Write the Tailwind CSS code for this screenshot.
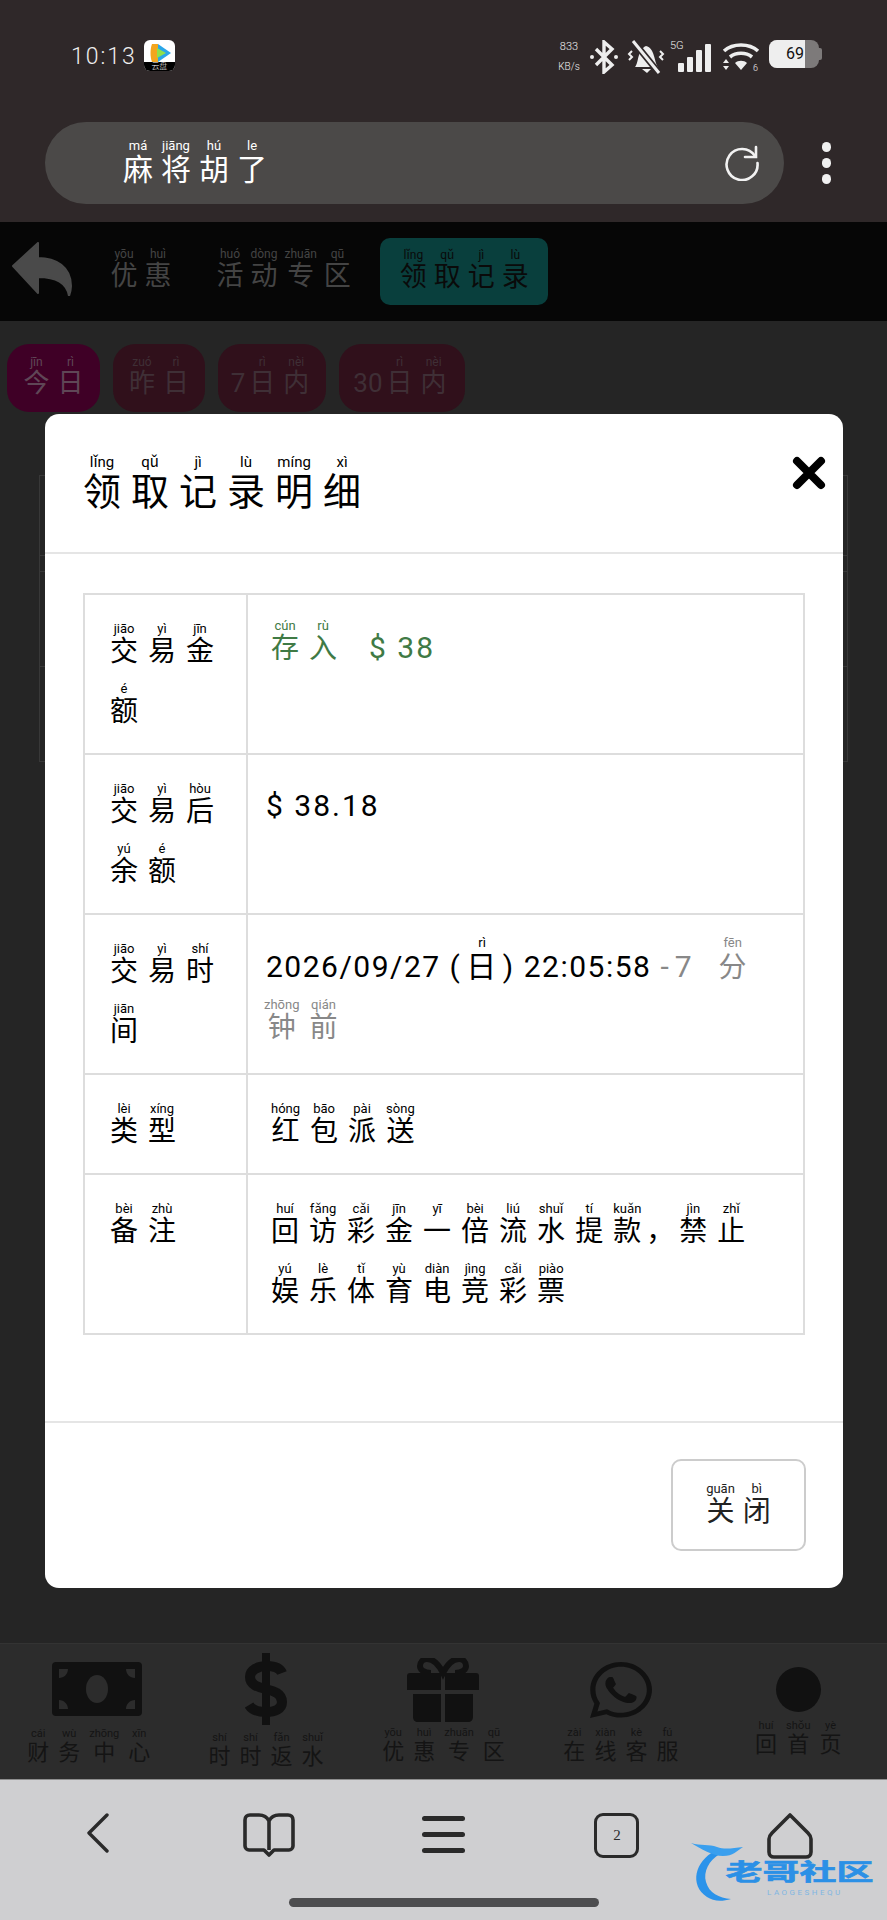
<!DOCTYPE html>
<html lang="zh">
<head>
<meta charset="utf-8">
<script src="https://cdn.jsdelivr.net/npm/@tailwindcss/browser@4"></script>
</head>
<body>
<div class="relative flex flex-col w-[887px] h-[1920px] overflow-hidden bg-[#252525] font-['Roboto','Noto_Sans_CJK_SC',sans-serif] font-light [&_ruby]:leading-none [&_rt]:font-normal [&_rt]:leading-[13px]">

  <!-- phone status + address bar -->
  <div class="h-[222px] shrink-0 bg-[#2f2829] text-[#eeeeee]">
    <div class="h-[122px] flex justify-between pl-[71px] pr-[65px] pt-[40px]">
      <div class="flex items-start gap-[7px]">
        <span class="text-[23px] leading-[32px] tracking-[2px] mt-[1px]">10:13</span>
        <div class="relative w-[31px] h-[31px] rounded-[6px] bg-white overflow-hidden">
          <svg viewBox="0 0 31 31" class="w-[31px] h-[31px]"><path d="M8 4h6l13 9-13 9H8z" fill="#2aa6e8"/><path d="M8 4c-2 5-2 13 0 18l6 0V4z" fill="#f3a51e"/><path d="M13 8l9 5-9 5z" fill="#8fe04a"/></svg>
          <span class="absolute left-0 right-0 bottom-0 h-[9px] bg-black text-white text-[8px] leading-[9px] text-center">云盘</span>
        </div>
      </div>
      <div class="flex items-start">
        <div class="w-[26px] mr-[7px] text-center text-[11px] leading-[11px]"><div class="mt-[1px]">833</div><div class="mt-[9px] whitespace-nowrap text-[10px]">KB/s</div></div>
        <svg viewBox="0 0 30 34" class="w-[30px] h-[34px]" fill="none" stroke="#eeeeee" stroke-width="3.4"><path d="M7 9l16 16-8 7V2l8 7L7 25"/><circle cx="3" cy="17" r="2" fill="#eeeeee" stroke="none"/><circle cx="27" cy="17" r="2" fill="#eeeeee" stroke="none"/></svg>
        <svg viewBox="0 0 38 34" class="w-[38px] h-[34px] ml-[8px]" fill="none"><path d="M8 27c4-4 2-17 11-21 9 2 8 16 12 21z" fill="#eeeeee"/><path d="M15 29h9l-4 4z" fill="#eeeeee"/><path d="M6 1l26 32" stroke="#2f2829" stroke-width="6.500"/><path d="M6 1l26 32" stroke="#eeeeee" stroke-width="3"/><path d="M5 11l-3 3 3 3-3 3M33 11l3 3-3 3 3 3" stroke="#eeeeee" stroke-width="2"/></svg>
        <div class="relative w-[44px] h-[32px] ml-[5px]">
          <span class="absolute left-0 top-0 text-[11px] leading-[11px]">5G</span>
          <div class="absolute left-[8px] bottom-0 flex items-end gap-[3px]">
            <span class="w-[6px] h-[9px] rounded-[1px] bg-[#eeeeee]"></span><span class="w-[6px] h-[15px] rounded-[1px] bg-[#eeeeee]"></span><span class="w-[6px] h-[22px] rounded-[1px] bg-[#eeeeee]"></span><span class="w-[6px] h-[28px] rounded-[1px] bg-[#eeeeee]"></span>
          </div>
        </div>
        <svg viewBox="0 0 38 30" class="w-[38px] h-[30px] ml-[8px] mt-[2px]" fill="none" stroke="#eeeeee" stroke-width="3.6"><path d="M2 9c9-8 25-8 34 0M8 15c6-5 16-5 22 0"/><path d="M19 28l-6-7c3-3 9-3 12 0z" fill="#eeeeee" stroke="none"/><path d="M1 21l3-4 3 4zM1 24l3 4 3-4z" fill="#eeeeee" stroke="none"/><text x="31" y="29" font-size="9" fill="#eeeeee" stroke="none">6</text></svg>
        <div class="flex items-center ml-[9px]">
          <div class="relative w-[50px] h-[28px] rounded-[8px] bg-[#7d7a7a] overflow-hidden">
            <div class="w-[36px] h-[28px] bg-[#eeeeee] text-[#111111] text-right text-[16px] leading-[28px] font-normal pr-[1px]">69</div>
          </div>
          <div class="w-[3px] h-[12px] rounded-r-[2px] bg-[#7d7a7a]"></div>
        </div>
      </div>
    </div>
    <div class="flex items-center pl-[45px] pr-[54px]">
      <div class="flex items-center justify-between w-[739px] h-[82px] rounded-[41px] bg-[#4b4948] pl-[74px] pr-[24px] text-white text-[30px] leading-[50px] font-normal [&_ruby]:mx-[4px] [&_rt]:text-[13px]">
        <div class="mt-[8px]"><ruby>麻<rt>má</rt></ruby><ruby>将<rt>jiāng</rt></ruby><ruby>胡<rt>hú</rt></ruby><ruby>了<rt>le</rt></ruby></div>
        <svg viewBox="0 0 36 36" class="w-[36px] h-[36px]" fill="none" stroke="#f2f2f2" stroke-width="2.6" stroke-linecap="round"><path d="M31 11A15.500 15.500 0 1 0 33.500 18"/><path d="M32 2v10H21"/></svg>
      </div>
      <div class="flex flex-col gap-[6px] ml-[38px]">
        <span class="w-[9px] h-[10px] rounded-full bg-[#f0f0f0]"></span><span class="w-[9px] h-[10px] rounded-full bg-[#f0f0f0]"></span><span class="w-[9px] h-[10px] rounded-full bg-[#f0f0f0]"></span>
      </div>
    </div>
  </div>

  <!-- page header -->
  <div class="flex items-center h-[99px] shrink-0 bg-[#060606] pl-[12px] text-[#444444] text-[27px] leading-[44px] font-normal [&_ruby]:mx-[3.500px] [&_rt]:text-[12px]">
    <svg viewBox="0 0 60 54" class="w-[60px] h-[54px] mt-[-6px]"><path d="M26 1v15c18 0 33 9 33 28 0 4-1 7-2 10-2-13-14-19-31-19v16L1 24z" fill="#4a4a4a" stroke="#4a4a4a" stroke-width="2" stroke-linejoin="round"/></svg>
    <div class="ml-[35px] mt-[4px]"><ruby>优<rt>yōu</rt></ruby><ruby>惠<rt>huì</rt></ruby></div>
    <div class="ml-[38px] mt-[4px]"><ruby>活<rt>huó</rt></ruby><ruby>动<rt>dòng</rt></ruby><ruby>专<rt>zhuān</rt></ruby><ruby>区<rt>qū</rt></ruby></div>
    <div class="flex items-center justify-center w-[168px] h-[67px] ml-[26px] mt-[-1px] rounded-[10px] bg-[#093f3d] text-[#0a0a0a]"><div class="mt-[5px]"><ruby>领<rt>lǐng</rt></ruby><ruby>取<rt>qǔ</rt></ruby><ruby>记<rt>jì</rt></ruby><ruby>录<rt>lù</rt></ruby></div></div>
  </div>

  <!-- page content behind the dialog -->
  <div class="flex-1 px-[7px] pt-[23px]">
    <div class="flex gap-[13px] text-[26px] leading-[40px] font-normal [&_ruby]:mx-[4px] [&_rt]:text-[12px]">
      <div class="flex items-center justify-center w-[93px] h-[68px] rounded-[22px] bg-[#3f0026] text-[#5f4656]"><div class="mt-[3px]"><ruby>今<rt>jīn</rt></ruby><ruby>日<rt>rì</rt></ruby></div></div>
      <div class="flex items-center justify-center w-[92px] h-[68px] rounded-[22px] bg-[#30101b] text-[#3f2f36]"><div class="mt-[3px]"><ruby>昨<rt>zuó</rt></ruby><ruby>日<rt>rì</rt></ruby></div></div>
      <div class="flex items-center justify-center w-[108px] h-[68px] rounded-[22px] bg-[#30101b] text-[#3f2f36]"><div class="mt-[3px]">7<ruby>日<rt>rì</rt></ruby><ruby>内<rt>nèi</rt></ruby></div></div>
      <div class="flex items-center justify-center w-[126px] h-[68px] rounded-[22px] bg-[#30101b] text-[#3f2f36]"><div class="mt-[3px]">30<ruby>日<rt>rì</rt></ruby><ruby>内<rt>nèi</rt></ruby></div></div>
    </div>
    <div class="w-[809px] h-[287px] mt-[63px] ml-[32px] border border-[#383838]">
      <div class="h-[80px] border-b border-[#383838]"></div>
      <div class="h-[16px] border-b border-[#383838]"></div>
      <div class="h-[95px] border-b border-[#383838]"></div>
    </div>
  </div>

  <!-- fixed bottom nav of the page -->
  <div class="grid grid-cols-5 h-[136px] shrink-0 bg-[#2c2c2c] border-t border-[#333333] text-[#141414] text-[22px] leading-[36px] font-normal [&_ruby]:mx-[4.500px] [&_rt]:text-[11px]">
    <div class="flex flex-col items-center">
      <svg viewBox="0 0 90 54" class="w-[90px] h-[54px] mt-[18px] ml-[16px]"><rect width="90" height="54" rx="4" fill="#111111"/><ellipse cx="45" cy="27" rx="11" ry="14" fill="#2c2c2c"/><path d="M7 7h9c0 5-4 9-9 9zM83 7h-9c0 5 4 9 9 9zM7 47h9c0-5-4-9-9-9zM83 47h-9c0-5 4-9 9-9z" fill="#2c2c2c"/></svg>
      <div class="mt-[12px] whitespace-nowrap"><ruby>财<rt>cái</rt></ruby><ruby>务<rt>wù</rt></ruby><ruby>中<rt>zhōng</rt></ruby><ruby>心<rt>xīn</rt></ruby></div>
    </div>
    <div class="flex flex-col items-center">
      <svg viewBox="0 0 42 72" class="w-[42px] h-[72px] mt-[9px]" fill="none" stroke="#111111" stroke-width="10"><path d="M37 20c-2-5-8-7-15-7-9 0-17 4-17 11 0 16 32 8 32 25 0 7-7 10-16 10-8 0-14-2-17-7"/><path d="M21 0v72" stroke-width="8"/></svg>
      <div class="mt-[6px] whitespace-nowrap"><ruby>时<rt>shí</rt></ruby><ruby>时<rt>shí</rt></ruby><ruby>返<rt>fǎn</rt></ruby><ruby>水<rt>shuǐ</rt></ruby></div>
    </div>
    <div class="flex flex-col items-center">
      <svg viewBox="0 0 72 64" class="w-[72px] h-[64px] mt-[14px]"><path d="M24 15c-8 0-11-4-11-7 0-4 3-7 7-7 6 0 12 6 16 14 4-8 10-14 16-14 4 0 7 3 7 7 0 3-3 7-11 7" fill="none" stroke="#111111" stroke-width="6"/><path d="M3 15h31v17H0V18c0-2 1-3 3-3zM38 15h31c2 0 3 1 3 3v14H38zM6 36h28v28H11c-3 0-5-2-5-5zM38 36h28v23c0 3-2 5-5 5H38z" fill="#111111"/></svg>
      <div class="mt-[5px] whitespace-nowrap"><ruby>优<rt>yōu</rt></ruby><ruby>惠<rt>huì</rt></ruby><ruby>专<rt>zhuān</rt></ruby><ruby>区<rt>qū</rt></ruby></div>
    </div>
    <div class="flex flex-col items-center">
      <svg viewBox="0 0 448 512" class="w-[62px] h-[64px] mt-[14px]" preserveAspectRatio="none"><path fill="#111111" d="M380.9 97.1C339 55.1 283.2 32 223.9 32c-122.4 0-222 99.6-222 222 0 39.1 10.200 77.300 29.600 111L0 480l117.700-30.900c32.400 17.700 68.900 27 106.100 27h.1c122.300 0 224.100-99.600 224.100-222 0-59.300-25.200-115-67.100-157zm-157 341.600c-33.200 0-65.700-8.900-94-25.700l-6.700-4-69.800 18.300L72 359.200l-4.400-7c-18.500-29.400-28.200-63.300-28.200-98.200 0-101.700 82.800-184.500 184.600-184.500 49.300 0 95.600 19.200 130.400 54.100 34.800 34.900 56.200 81.200 56.100 130.500 0 101.800-84.900 184.600-186.600 184.600zm101.200-138.200c-5.500-2.800-32.800-16.200-37.900-18-5.100-1.900-8.800-2.800-12.500 2.800-3.700 5.600-14.300 18-17.600 21.800-3.200 3.700-6.500 4.200-12 1.400-32.600-16.300-54-29.100-75.500-66-5.700-9.800 5.700-9.100 16.300-30.300 1.800-3.700.9-6.900-.5-9.700-1.400-2.800-12.500-30.100-17.100-41.200-4.500-10.800-9.100-9.300-12.500-9.500-3.200-.2-6.900-.2-10.600-.2-3.700 0-9.700 1.400-14.800 6.900-5.100 5.600-19.400 19-19.400 46.300 0 27.300 19.900 53.700 22.600 57.400 2.800 3.700 39.100 59.700 94.800 83.800 35.200 15.200 49 16.500 66.600 13.900 10.700-1.600 32.800-13.400 37.400-26.400 4.600-13 4.600-24.100 3.200-26.400-1.300-2.500-5-3.900-10.500-6.600z"/></svg>
      <div class="mt-[5px] whitespace-nowrap"><ruby>在<rt>zài</rt></ruby><ruby>线<rt>xiàn</rt></ruby><ruby>客<rt>kè</rt></ruby><ruby>服<rt>fú</rt></ruby></div>
    </div>
    <div class="flex flex-col items-center">
      <div class="w-[45px] h-[45px] mt-[23px] rounded-full bg-[#111111]"></div>
      <div class="mt-[7px] whitespace-nowrap"><ruby>回<rt>huí</rt></ruby><ruby>首<rt>shǒu</rt></ruby><ruby>页<rt>yè</rt></ruby></div>
    </div>
  </div>

  <!-- browser toolbar -->
  <div class="relative flex flex-col items-center h-[141px] shrink-0 bg-[#cfcfd1] border-t border-[#8d8d8d]">
    <div class="grid grid-cols-5 w-full h-[118px] pt-[33px] text-[#2a2a2a]">
      <div class="flex justify-center"><svg viewBox="0 0 24 40" class="w-[24px] h-[40px] ml-[18px]" fill="none" stroke="#2a2a2a" stroke-width="3.400" stroke-linecap="round" stroke-linejoin="round"><path d="M21 2L3 20l18 18"/></svg></div>
      <div class="flex justify-center"><svg viewBox="0 0 52 44" class="w-[52px] h-[44px] ml-[5px]" fill="none" stroke="#2a2a2a" stroke-width="3.600" stroke-linejoin="round"><path d="M26 8c-2-4-6-6-10-6H7C4 2 2 4 2 7v26c0 2 2 4 4 4h15l5 5 5-5h15c2 0 4-2 4-4V7c0-3-2-5-5-5h-9c-4 0-8 2-10 6zv29"/></svg></div>
      <div class="flex flex-col items-center gap-[11px] pt-[3px]"><span class="w-[43px] h-[5px] rounded-full bg-[#2a2a2a]"></span><span class="w-[43px] h-[5px] rounded-full bg-[#2a2a2a]"></span><span class="w-[43px] h-[5px] rounded-full bg-[#2a2a2a]"></span></div>
      <div class="flex justify-center"><div class="flex items-center justify-center w-[45px] h-[45px] mr-[8px] rounded-[9px] border-[3.500px] border-[#2a2a2a] font-['Liberation_Serif',serif] font-normal text-[15px]">2</div></div>
      <div class="flex justify-center"><svg viewBox="0 0 46 46" class="w-[46px] h-[46px] mr-[16px]" fill="none" stroke="#2a2a2a" stroke-width="3.600" stroke-linejoin="round"><path d="M23 2l18 18c2 2 3 4 3 6v13c0 3-2 5-5 5H7c-3 0-5-2-5-5V26c0-2 1-4 3-6z"/></svg></div>
    </div>
    <div class="w-[310px] h-[9px] rounded-full bg-[#4d4d4f]"></div>
    <!-- watermark -->
    <svg viewBox="0 0 70 62" class="absolute left-[689px] top-[61px] w-[70px] h-[62px]" fill="none"><path d="M26 10C6 20 0 44 18 56c6 4 14 5 24 2-12-1-22-6-25-17-3-10 3-22 14-28z" fill="#2b93ea"/><path d="M2 2c10 3 18 1 26 4s16 1 26 0c-6 4-10 9-20 9S12 8 2 2z" fill="#3a9fee"/></svg>
    <div class="absolute left-[722px] top-[80px] w-[155px] origin-top scale-y-62 text-center text-[#2b90e6] text-[37px] leading-[32px] font-bold font-['Noto_Sans_CJK_SC',sans-serif] whitespace-nowrap [-webkit-text-stroke:1px_#2b90e6]">老哥社区</div>
    <div class="absolute left-[767px] top-[108px] text-[#7fb6e2] text-[8px] leading-[10px] font-normal tracking-[2.500px]">LAOGESHEQU</div>
  </div>

  <!-- dialog -->
  <div class="absolute left-[45px] top-[414px] flex flex-col w-[798px] h-[1174px] rounded-[14px] bg-white text-black font-normal">
    <div class="relative h-[140px] shrink-0 border-b-2 border-[#e5e5e5] pl-[33px] pt-[39px] text-[38px] leading-[50px] [&_ruby]:mx-[5px] [&_rt]:text-[15px]">
      <div><ruby>领<rt>lǐng</rt></ruby><ruby>取<rt>qǔ</rt></ruby><ruby>记<rt>jì</rt></ruby><ruby>录<rt>lù</rt></ruby><ruby>明<rt>míng</rt></ruby><ruby>细<rt>xì</rt></ruby></div>
      <svg viewBox="0 0 34 34" class="absolute left-[747px] top-[42px] w-[34px] h-[34px]" fill="none" stroke="#000000" stroke-width="8" stroke-linecap="round"><path d="M5 5l24 24M29 5L5 29"/></svg>
    </div>
    <div class="flex-1 px-[38px] pt-[39px]">
      <table class="w-[722px] table-fixed border-collapse border-2 border-[#dddddd] text-[28px] leading-[60px] [&_ruby]:mx-[5px] [&_rt]:text-[13px] [&_td]:border-2 [&_td]:border-[#dddddd] [&_td]:align-top">
        <tbody>
          <tr class="h-[160px]">
            <td class="w-[163px] pl-[20px] pt-[27px]"><ruby>交<rt>jiāo</rt></ruby><ruby>易<rt>yì</rt></ruby><ruby>金<rt>jīn</rt></ruby><br><ruby>额<rt>é</rt></ruby></td>
            <td class="pl-[18px] pt-[23px] text-[#3f7a45] whitespace-nowrap"><ruby>存<rt>cún</rt></ruby><ruby>入<rt>rù</rt></ruby><span class="ml-[27px] text-[30px] tracking-[2px]">$ 38</span></td>
          </tr>
          <tr class="h-[160px]">
            <td class="pl-[20px] pt-[27px]"><ruby>交<rt>jiāo</rt></ruby><ruby>易<rt>yì</rt></ruby><ruby>后<rt>hòu</rt></ruby><br><ruby>余<rt>yú</rt></ruby><ruby>额<rt>é</rt></ruby></td>
            <td class="pl-[18px] pt-[21px] text-[30px] tracking-[2px]">$ 38.18</td>
          </tr>
          <tr class="h-[160px]">
            <td class="pl-[20px] pt-[27px]"><ruby>交<rt>jiāo</rt></ruby><ruby>易<rt>yì</rt></ruby><ruby>时<rt>shí</rt></ruby><br><ruby>间<rt>jiān</rt></ruby></td>
            <td class="pl-[18px] pt-[22px] whitespace-nowrap"><span class="text-[30px] tracking-[1.500px] [&_rt]:tracking-normal">2026/09/27 (<ruby>日<rt>rì</rt></ruby>) 22:05:58</span><span class="ml-[9px] text-[#888888]"><span class="text-[30px] tracking-[6px]">-7</span><span class="ml-[16px]"><ruby>分<rt>fēn</rt></ruby></span><br><span class="ml-[-7px]"><ruby>钟<rt>zhōng</rt></ruby></span><ruby>前<rt>qián</rt></ruby></span></td>
          </tr>
          <tr class="h-[100px]">
            <td class="pl-[20px] pt-[27px]"><ruby>类<rt>lèi</rt></ruby><ruby>型<rt>xíng</rt></ruby></td>
            <td class="pl-[18px] pt-[27px]"><ruby>红<rt>hóng</rt></ruby><ruby>包<rt>bāo</rt></ruby><ruby>派<rt>pài</rt></ruby><ruby>送<rt>sòng</rt></ruby></td>
          </tr>
          <tr class="h-[160px]">
            <td class="pl-[20px] pt-[27px]"><ruby>备<rt>bèi</rt></ruby><ruby>注<rt>zhù</rt></ruby></td>
            <td class="pl-[18px] pt-[27px] whitespace-nowrap"><ruby>回<rt>huí</rt></ruby><ruby>访<rt>fǎng</rt></ruby><ruby>彩<rt>cǎi</rt></ruby><ruby>金<rt>jīn</rt></ruby><ruby>一<rt>yī</rt></ruby><ruby>倍<rt>bèi</rt></ruby><ruby>流<rt>liú</rt></ruby><ruby>水<rt>shuǐ</rt></ruby><ruby>提<rt>tí</rt></ruby><ruby>款<rt>kuǎn</rt></ruby>，<ruby>禁<rt>jìn</rt></ruby><ruby>止<rt>zhǐ</rt></ruby><br><ruby>娱<rt>yú</rt></ruby><ruby>乐<rt>lè</rt></ruby><ruby>体<rt>tǐ</rt></ruby><ruby>育<rt>yù</rt></ruby><ruby>电<rt>diàn</rt></ruby><ruby>竞<rt>jìng</rt></ruby><ruby>彩<rt>cǎi</rt></ruby><ruby>票<rt>piào</rt></ruby></td>
          </tr>
        </tbody>
      </table>
    </div>
    <div class="flex items-start justify-end h-[167px] shrink-0 border-t-2 border-[#e5e5e5] pt-[36px] pr-[37px]">
      <div class="flex items-center justify-center w-[135px] h-[92px] rounded-[10px] border-2 border-[#cccccc] text-[#222222] text-[28px] leading-[44px] [&_ruby]:mx-[4px] [&_rt]:text-[13px]"><div class="mt-[6px]"><ruby>关<rt>guān</rt></ruby><ruby>闭<rt>bì</rt></ruby></div></div>
    </div>
  </div>
</div>
</body>
</html>
